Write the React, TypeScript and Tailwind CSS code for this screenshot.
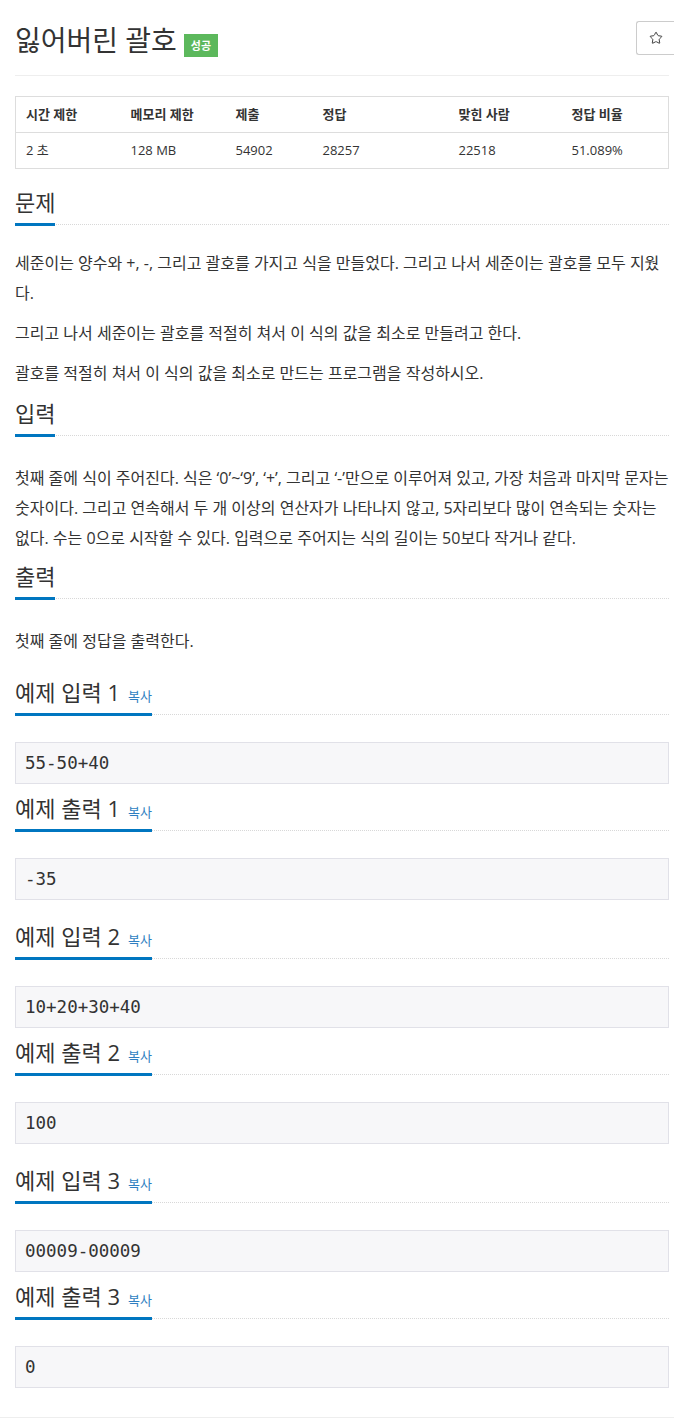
import { Star } from "lucide-react"

const stats = [
  { label: "시간 제한", value: "2 초", w: "w-[105px]" },
  { label: "메모리 제한", value: "128 MB", w: "w-[105px]" },
  { label: "제출", value: "54902", w: "w-[87px]" },
  { label: "정답", value: "28257", w: "w-[136px]" },
  { label: "맞힌 사람", value: "22518", w: "w-[113px]" },
  { label: "정답 비율", value: "51.089%", w: "" },
]

const samples = [
  { title: "예제 입력 1", data: "55-50+40", out: false },
  { title: "예제 출력 1", data: "-35", out: true },
  { title: "예제 입력 2", data: "10+20+30+40", out: false },
  { title: "예제 출력 2", data: "100", out: true },
  { title: "예제 입력 3", data: "00009-00009", out: false },
  { title: "예제 출력 3", data: "0", out: true },
]

function Headline({ children }: { children: React.ReactNode }) {
  return (
    <div className="border-b border-dotted border-[#d8d8d8]">
      <h2 className="inline-block -mb-[2px] border-b-[3px] border-[#0076c0] pb-[6px] text-[22px] leading-[30px] font-normal text-[#333]">
        {children}
      </h2>
    </div>
  )
}

export default function App() {
  return (
    <div className="min-h-[1420px] overflow-hidden bg-white font-['Open_Sans','Noto_Sans_CJK_KR',sans-serif] text-[#333]">
      <div className="pl-[15px] pr-[5px] pt-[20px]">
        <div className="flex h-[40px] items-start justify-between">
          <div className="flex items-center">
            <h1 className="text-[28px] leading-[40px] font-normal text-[#333]">잃어버린 괄호</h1>
            <span className="ml-[7px] mt-[10px] inline-block h-[23px] bg-[#5cb85c] px-[7px] text-[11px] leading-[23px] font-bold text-white">
              성공
            </span>
          </div>
          <button className="-mr-[5px] mt-[1px] flex h-[34px] w-[38px] items-center justify-center rounded-l-[3px] border border-r-0 border-[#ccc] bg-white">
            <Star className="h-[14px] w-[14px] text-[#333]" strokeWidth={1.6} />
          </button>
        </div>
        <div className="mt-[15px] border-t border-[#eee]" />

        <table className="mt-[20px] w-full border-collapse border border-[#ddd] text-[13px]">
          <thead>
            <tr className="h-[36px] border-b border-[#ddd]">
              {stats.map((s) => (
                <th key={s.label} className={`${s.w} pl-[10px] text-left font-bold`}>
                  {s.label}
                </th>
              ))}
            </tr>
          </thead>
          <tbody>
            <tr className="h-[36px]">
              {stats.map((s) => (
                <td key={s.label} className="pl-[10px] text-left">
                  {s.value}
                </td>
              ))}
            </tr>
          </tbody>
        </table>

        <section className="mt-[18px]">
          <Headline>문제</Headline>
          <div className="mt-[23px] text-[16px] leading-[30px]">
            <p className="mb-[10px]">
              세준이는 양수와 +, -, 그리고 괄호를 가지고 식을 만들었다. 그리고 나서 세준이는 괄호를 모두 지웠다.
            </p>
            <p className="mb-[10px]">그리고 나서 세준이는 괄호를 적절히 쳐서 이 식의 값을 최소로 만들려고 한다.</p>
            <p className="mb-[10px]">괄호를 적절히 쳐서 이 식의 값을 최소로 만드는 프로그램을 작성하시오.</p>
          </div>
        </section>

        <section className="mt-[2px]">
          <Headline>입력</Headline>
          <div className="mt-[27px] text-[16px] leading-[30px]">
            <p className="mb-[10px]">
              첫째 줄에 식이 주어진다. 식은 ‘0’~‘9’, ‘+’, 그리고 ‘-’만으로 이루어져 있고, 가장 처음과 마지막 문자는 숫자이다. 그리고 연속해서 두 개 이상의 연산자가 나타나지 않고, 5자리보다 많이 연속되는 숫자는 없다. 수는 0으로 시작할 수 있다. 입력으로 주어지는 식의 길이는 50보다 작거나 같다.
            </p>
          </div>
        </section>

        <section className="-mt-[2px]">
          <Headline>출력</Headline>
          <div className="mt-[27px] text-[16px] leading-[30px]">
            <p className="mb-[10px]">첫째 줄에 정답을 출력한다.</p>
          </div>
        </section>

        <div className="mt-[21px]">
          {samples.map((s) => (
            <section key={s.title} className={s.out ? "mb-[21px]" : "mb-[9px]"}>
              <Headline>
                {s.title}
                <span className="ml-[8px] text-[13px] leading-none text-[#2f7fc1]">복사</span>
              </Headline>
              <pre className="mt-[27px] flex h-[42px] items-center border border-[#e1e1e8] bg-[#f7f7f9] pl-[9px] font-['DejaVu_Sans_Mono',monospace] text-[17.5px] text-[#333]">
                {s.data}
              </pre>
            </section>
          ))}
        </div>
      </div>
      <div className="mt-[29px] h-[10px] border-t border-[#eee]" />
    </div>
  )
}
